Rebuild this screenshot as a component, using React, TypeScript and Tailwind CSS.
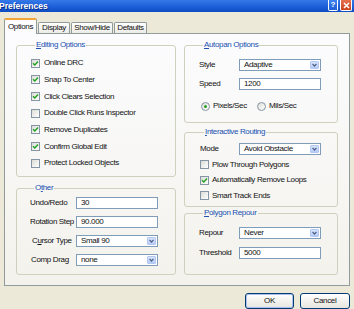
import { ReactNode } from 'react'

const font = "font-['Liberation_Sans',Arial,sans-serif]"

function CheckBox({ checked }: { checked?: boolean }) {
    return (
        <span className="w-[9px] h-[9px] shrink-0 border border-[#8595A6] bg-linear-to-br from-[#DCDCD6] to-white flex items-center justify-center">
            {checked && (
                <svg width="7" height="7" viewBox="0 0 7 7">
                    <path d="M1 3.2 L2.8 5 L6 1.5" fill="none" stroke="#21A121" strokeWidth="1.4" />
                </svg>
            )}
        </span>
    )
}

function Radio({ checked }: { checked?: boolean }) {
    return (
        <span className="w-[9px] h-[9px] shrink-0 rounded-full border border-[#8595A6] bg-linear-to-br from-[#DCDCD6] to-white flex items-center justify-center">
            {checked && <span className="w-[3px] h-[3px] rounded-full bg-[#21A121]" />}
        </span>
    )
}

function CheckRow({ label, checked, h, gap }: { label: string; checked?: boolean; h: string; gap: string }) {
    return (
        <div className={`flex items-center ${h} ${gap}`}>
            <CheckBox checked={checked} />
            <span className="leading-none">{label}</span>
        </div>
    )
}

function TextBox({ value }: { value: string }) {
    return (
        <div className="w-[82px] h-[12px] border border-[#7F9DB9] bg-white flex items-center pl-[4px] leading-none">
            {value}
        </div>
    )
}

function Select({ value }: { value: string }) {
    return (
        <div className="w-[82px] h-[12px] border border-[#7F9DB9] bg-white flex items-center justify-between pl-[4px] pr-[1px] leading-none">
            <span>{value}</span>
            <span className="w-[9px] h-[8px] rounded-[1px] border border-[#B4C8F6] bg-linear-to-b from-[#D8E4FD] to-[#B6CBF8] flex items-center justify-center">
                <svg width="5" height="4" viewBox="0 0 5 4">
                    <path d="M0.5 0.8 L2.5 3 L4.5 0.8" fill="none" stroke="#4D6185" strokeWidth="1.2" />
                </svg>
            </span>
        </div>
    )
}

function Group({ title, className, children }: { title: ReactNode; className: string; children: ReactNode }) {
    return (
        <fieldset className={`border border-[#D0D0BF] rounded-[3px] ${className}`}>
            <legend className="ml-[4px] px-[1px] leading-[10px] text-[#2050B0]">{title}</legend>
            {children}
        </fieldset>
    )
}

function FieldRow({ label, labelW, h, children }: { label: ReactNode; labelW: string; h: string; children: ReactNode }) {
    return (
        <div className={`flex items-center ${h}`}>
            <span className={`${labelW} leading-none`}>{label}</span>
            {children}
        </div>
    )
}

function Tab({ label, w, selected }: { label: string; w: string; selected?: boolean }) {
    if (selected) {
        return (
            <div className={`relative z-10 ${w} h-[16px] -mb-[1px] border-x border-[#919B9C] border-t-2 border-t-[#F4A53A] rounded-t-[2px] bg-[#FCFCFE] flex items-center justify-center leading-none`}>
                {label}
            </div>
        )
    }
    return (
        <div className={`${w} h-[11px] border-x border-t border-[#919B9C] rounded-t-[2px] bg-linear-to-b from-white to-[#ECEBE6] flex items-center justify-center leading-none`}>
            {label}
        </div>
    )
}

export default function App() {
    return (
        <div className={`${font} w-[354px] h-[309px] overflow-hidden bg-[#ECE9D8] text-[8px] tracking-[-0.35px] text-[#111] flex flex-col`}>
            {/* title bar */}
            <div className="h-[12px] shrink-0 bg-linear-to-b from-[#3579E8] via-[#1E61DA] to-[#0E4CC2] flex items-center justify-between pr-[2px]">
                <span className="-ml-[1px] text-[8.5px] font-bold tracking-normal text-white [text-shadow:1px_1px_0_#0A2E86] leading-none">
                    Preferences
                </span>
                <div className="flex items-center gap-[2px] self-start">
                    <span className="w-[10px] h-[11px] rounded-b-[2px] border border-t-0 border-white bg-linear-to-b from-[#3C83F0] to-[#1F5FD6] text-white font-bold text-[8px] tracking-normal flex items-center justify-center leading-none">
                        ?
                    </span>
                    <span className="w-[12px] h-[11px] rounded-b-[2px] border border-t-0 border-white bg-linear-to-b from-[#E6714F] to-[#C9431C] flex items-center justify-center">
                        <svg width="7" height="7" viewBox="0 0 7 7">
                            <path d="M1 1 L6 6 M6 1 L1 6" stroke="white" strokeWidth="1.5" />
                        </svg>
                    </span>
                </div>
            </div>

            {/* tabs */}
            <div className="h-[21px] shrink-0 flex items-end pl-[4px] gap-[1px]">
                <Tab label="Options" w="w-[33px]" selected />
                <Tab label="Display" w="w-[32px]" />
                <Tab label="Show/Hide" w="w-[42px]" />
                <Tab label="Defaults" w="w-[33px]" />
            </div>

            {/* tab page */}
            <div className="ml-[4px] w-[346px] h-[253px] shrink-0 border border-[#919B9C] bg-linear-to-b from-[#FCFCFE] to-[#F3F2EC] flex gap-[8px] pl-[11px] pt-[6px]">
                {/* left column */}
                <div className="w-[160px] flex flex-col gap-[6px]">
                    <Group title={<><span className="underline">E</span>diting Options</>} className="h-[137px] pl-[14px] pt-[5px]">
                        <CheckRow label="Online DRC" checked h="h-[16.67px]" gap="gap-[4px]" />
                        <CheckRow label="Snap To Center" checked h="h-[16.67px]" gap="gap-[4px]" />
                        <CheckRow label="Click Clears Selection" checked h="h-[16.67px]" gap="gap-[4px]" />
                        <CheckRow label="Double Click Runs Inspector" h="h-[16.67px]" gap="gap-[4px]" />
                        <CheckRow label="Remove Duplicates" checked h="h-[16.67px]" gap="gap-[4px]" />
                        <CheckRow label="Confirm Global Edit" checked h="h-[16.67px]" gap="gap-[4px]" />
                        <CheckRow label="Protect Locked Objects" h="h-[16.67px]" gap="gap-[4px]" />
                    </Group>
                    <Group title={<>O<span className="underline">t</span>her</>} className="h-[92px] pl-[13px]">
                        <FieldRow label="Undo/Redo" labelW="w-[46px]" h="h-[19px]">
                            <TextBox value="30" />
                        </FieldRow>
                        <FieldRow label="Rotation Step" labelW="w-[46px]" h="h-[19px]">
                            <TextBox value="90.000" />
                        </FieldRow>
                        <FieldRow label={<>C<span className="underline">u</span>rsor Type</>} labelW="w-[46px] pl-[2px]" h="h-[19px]">
                            <Select value="Small 90" />
                        </FieldRow>
                        <FieldRow label="Comp Drag" labelW="w-[46px] pl-[1px]" h="h-[19px]">
                            <Select value="none" />
                        </FieldRow>
                    </Group>
                </div>

                {/* right column */}
                <div className="w-[154px] flex flex-col">
                    <Group title={<><span className="underline">A</span>utopan Options</>} className="h-[83px] pl-[14px] pt-[5px]">
                        <FieldRow label="Style" labelW="w-[40px]" h="h-[19px]">
                            <Select value="Adaptive" />
                        </FieldRow>
                        <FieldRow label="Speed" labelW="w-[40px]" h="h-[19px]">
                            <TextBox value="1200" />
                        </FieldRow>
                        <div className="flex items-center h-[18px] mt-[4px] pl-[2px]">
                            <div className="w-[56px] flex items-center gap-[3px]">
                                <Radio checked />
                                <span className="leading-none">Pixels/Sec</span>
                            </div>
                            <div className="flex items-center gap-[3px]">
                                <Radio />
                                <span className="leading-none">Mils/Sec</span>
                            </div>
                        </div>
                    </Group>
                    <Group title={<><span className="underline">I</span>nteractive Routing</>} className="mt-[4px] h-[80px] pl-[15px] pt-[4px]">
                        <FieldRow label="Mode" labelW="w-[39px]" h="h-[16px]">
                            <Select value="Avoid Obstacle" />
                        </FieldRow>
                        <CheckRow label="Plow Through Polygons" h="h-[15.5px]" gap="gap-[3px]" />
                        <CheckRow label="Automatically Remove Loops" checked h="h-[15.5px]" gap="gap-[3px]" />
                        <CheckRow label="Smart Track Ends" h="h-[15.5px]" gap="gap-[3px]" />
                    </Group>
                    <Group title={<><span className="underline">P</span>olygon Repour</>} className="mt-[1px] h-[67px] pl-[14px] pt-[5px]">
                        <FieldRow label="Repour" labelW="w-[40px]" h="h-[20px]">
                            <Select value="Never" />
                        </FieldRow>
                        <FieldRow label="Threshold" labelW="w-[40px]" h="h-[20px]">
                            <TextBox value="5000" />
                        </FieldRow>
                    </Group>
                </div>
            </div>

            {/* buttons */}
            <div className="flex justify-end gap-[6px] pr-[4px] mt-[7px]">
                <button className="w-[49px] h-[16px] rounded-[3px] border border-[#003C74] bg-linear-to-b from-white to-[#E6E5DE] shadow-[inset_0_0_0_1px_#A9C0F0] leading-none">
                    OK
                </button>
                <button className="w-[50px] h-[16px] rounded-[3px] border border-[#003C74] bg-linear-to-b from-white to-[#E6E5DE] leading-none">
                    Cancel
                </button>
            </div>
        </div>
    )
}
